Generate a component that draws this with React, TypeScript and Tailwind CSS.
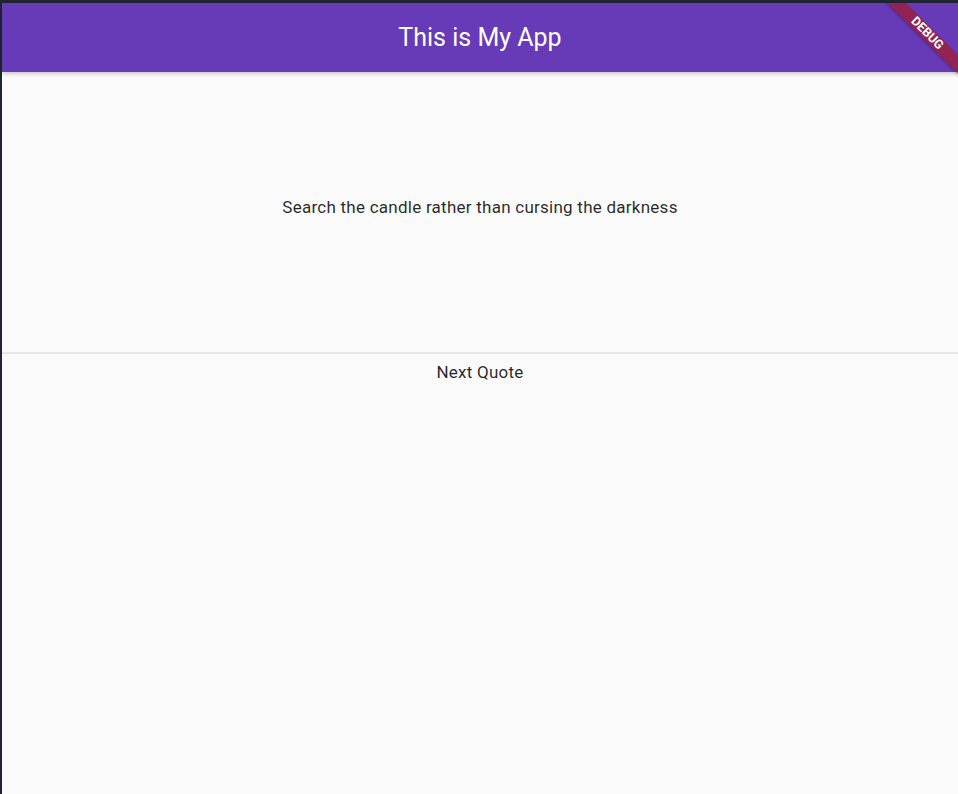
import React from "react";

// Debug ribbon in the top-right corner of the app bar
function DebugBanner() {
  return (
    <div className="pointer-events-none absolute right-0 top-0 h-[90px] w-[90px] overflow-hidden">
      <div className="absolute right-[-29px] top-[24px] flex h-[13px] w-[120px] rotate-45 items-center justify-center bg-[#a01c30]/[0.75] shadow-[0_1px_3px_rgba(0,0,0,0.25)]">
        <span className="text-[12.5px] font-bold leading-none text-white">DEBUG</span>
      </div>
    </div>
  );
}

export default function App() {
  const quote = "Search the candle rather than cursing the darkness";

  return (
    <div
      className="flex min-h-[794px] flex-col border-l-2 border-t-[3px] border-[#1e2533] bg-[#fafafa]"
      style={{ fontFamily: "Roboto, 'Noto Sans', sans-serif" }}
    >
      {/* App bar */}
      <header className="relative z-10 flex h-[69px] items-center justify-center bg-[#673ab7] shadow-[0_2px_4px_rgba(0,0,0,0.2)]">
        <h1 className="text-[25px] font-normal leading-none text-white">This is My App</h1>
        <DebugBanner />
      </header>

      {/* Quote */}
      <section className="flex h-[280px] items-start justify-center pt-[123px]">
        <p className="text-[17px] leading-[24px] tracking-[0.25px] text-black/[0.85]">{quote}</p>
      </section>

      <div className="h-[2px] bg-[#e6e6e6]" />

      {/* Button */}
      <div className="flex justify-center">
        <button className="px-3 pt-[6px] text-[17px] leading-[24px] tracking-[0.25px] text-black/[0.85]">Next Quote</button>
      </div>
    </div>
  );
}
